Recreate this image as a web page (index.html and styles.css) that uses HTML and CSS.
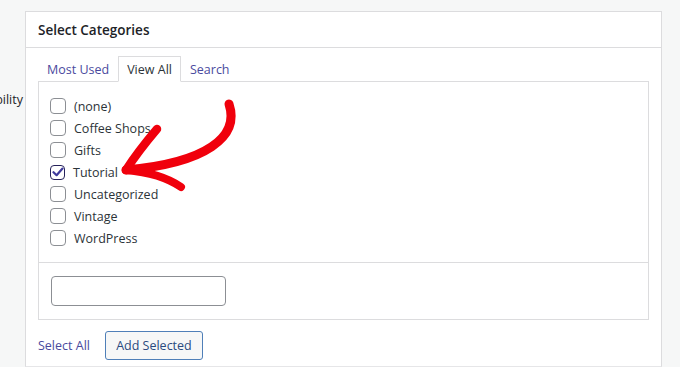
FILE: index.html
```html
<!doctype html>
<html>
<head>
  <meta charset="utf-8">
  <title>Select Categories</title>
  <link rel="stylesheet" href="styles.css">
</head>
<body>
  <div class="page">
    <div class="gutter"><span class="cut">Visibility</span></div>
    <div class="box">
      <div class="box-title">Select Categories</div>
      <div class="box-body">
        <div class="tabs">
          <a class="tab" href="#">Most Used</a>
          <a class="tab active" href="#">View All</a>
          <a class="tab" href="#">Search</a>
        </div>
        <div class="panel">
          <ul class="list">
            <li><span class="check"></span>(none)</li>
            <li><span class="check"></span>Coffee Shops</li>
            <li><span class="check"></span>Gifts</li>
            <li><span class="check checked">
              <svg width="12" height="10" viewBox="0 0 12 10"><path d="M1.5 5.2 L4.6 8.2 L10.5 1.6" fill="none" stroke="#3f3a9c" stroke-width="2.2" stroke-linecap="round" stroke-linejoin="round"/></svg>
            </span>Tutorial</li>
            <li><span class="check"></span>Uncategorized</li>
            <li><span class="check"></span>Vintage</li>
            <li><span class="check"></span>WordPress</li>
          </ul>
          <div class="new-cat">
            <input class="field" type="text">
          </div>
        </div>
        <div class="actions">
          <a class="select-all" href="#">Select All</a>
          <button class="button">Add Selected</button>
        </div>
      </div>
    </div>
  </div>
  <!-- hand drawn annotation arrow -->
  <svg class="arrow" width="680" height="367" viewBox="0 0 680 367">
    <g fill="none" stroke="#f0000c" stroke-linecap="round" stroke-linejoin="round">
      <path d="M229 104 C240 137 206 163 126 170" stroke-width="9"/>
      <path d="M157 129 C146 142 135 156 126 170" stroke-width="8.5"/>
      <path d="M126 170 C148 172 168 178 181 187" stroke-width="8"/>
    </g>
  </svg>
</body>
</html>
```

FILE: styles.css
```css
body {
  margin: 0;
  background: #f6f7f7;
  color: #2c3338;
  font-family: 'Open Sans', 'Noto Sans', sans-serif;
  font-size: 12.5px;
  overflow: hidden;
}

.page {
  display: flex;
  padding-top: 11px;
  height: 356px;
}

.gutter {
  width: 25px;
  flex-shrink: 0;
  overflow: hidden;
  display: flex;
  justify-content: flex-end;
  padding-top: 80px;
}

.cut {
  padding-right: 2px;
  white-space: nowrap;
  color: #1d2327;
}

.box {
  width: 635px;
  background: #fff;
  border: 1px solid #dcdcde;
  border-bottom-color: #e6e6e8;
}

.box-title {
  height: 35px;
  display: flex;
  align-items: center;
  padding: 0 12px;
  border-bottom: 1px solid #dcdcde;
  font-size: 13.5px;
  font-weight: 600;
  color: #1d2327;
}

.box-body {
  padding: 8px 12px 0;
}

.tabs {
  display: flex;
  margin-bottom: -1px;
}

.tab {
  padding: 4px 8px 3px;
  border: 1px solid transparent;
  border-bottom: none;
  color: #4a4a9e;
  text-decoration: none;
  line-height: 17px;
}

.tab.active {
  color: #2c3338;
  background: #fff;
  border-color: #dcdcde;
  border-bottom: 1px solid #fff;
  position: relative;
}

.panel {
  border: 1px solid #dcdcde;
}

.list {
  list-style: none;
  margin: 0;
  padding: 13px 11px 13px;
  border-bottom: 1px solid #dcdcde;
}

.list li {
  height: 22px;
  display: flex;
  align-items: center;
  gap: 8px;
}

.check {
  width: 14px;
  height: 14px;
  border: 1px solid #8c8f94;
  border-radius: 4px;
  display: flex;
  align-items: center;
  justify-content: center;
}

.check.checked {
  width: 13px;
  height: 13px;
  border: 1.5px solid #26225a;
}

.new-cat {
  padding: 13px 12px;
}

.field {
  display: block;
  width: 175px;
  height: 30px;
  box-sizing: border-box;
  border: 1px solid #8c8f94;
  border-radius: 4px;
  background: #fff;
}

.actions {
  display: flex;
  align-items: center;
  gap: 15px;
  margin-top: 11px;
}

.select-all {
  color: #4a4a9e;
  text-decoration: none;
}

.button {
  width: 98px;
  height: 29px;
  font-family: inherit;
  font-size: 12.5px;
  color: #2a4a7f;
  background: #f6f7f7;
  border: 1px solid #4f7fb8;
  border-radius: 3px;
  padding: 0;
}

.arrow {
  position: absolute;
  top: 0;
  left: 0;
  pointer-events: none;
}
```
